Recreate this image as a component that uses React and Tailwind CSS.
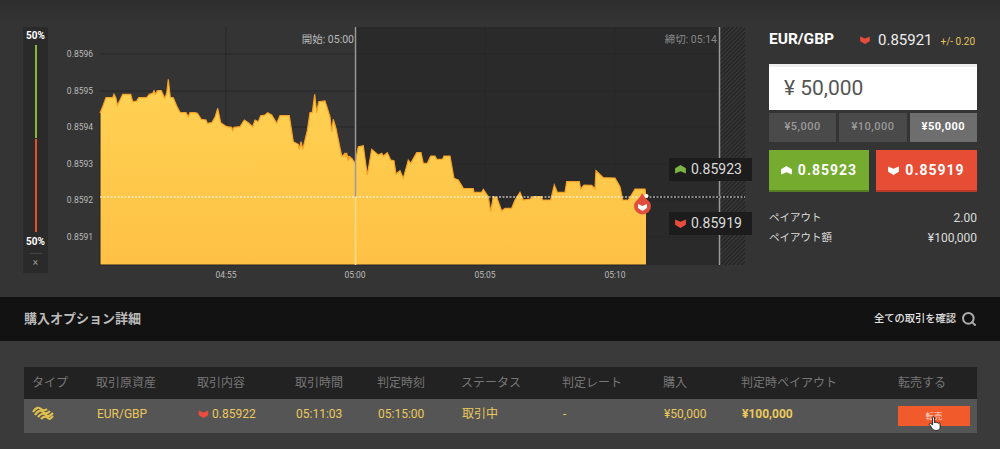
import { Search } from "lucide-react";

const FONT = "font-['Roboto','Noto_Sans_CJK_JP',sans-serif]";

// puntos de la curva, medidos sobre el recorte x3
const LEFT = [[300,340],[310,315],[318,293],[338,293],[342,283],[348,295],[352,316],[360,300],[368,283],[392,283],[398,305],[410,303],[416,293],[440,293],[448,283],[458,280],[462,272],[466,283],[472,272],[484,272],[494,295],[500,280],[505,238],[511,292],[520,293],[530,318],[540,337],[558,338],[565,350],[570,338],[585,338],[592,340],[604,358],[618,360],[622,370],[635,368],[645,352],[653,325],[662,368],[680,380],[695,382],[698,392],[702,382],[720,380],[733,360],[745,368],[758,380],[765,360],[775,365],[782,347],[795,345],[803,338],[815,345],[830,370],[840,347],[868,347],[880,425],[895,433],[898,448],[903,425],[908,448],[922,392],[930,338],[937,338],[944,283],[950,338],[956,305],[975,303],[990,350],[995,395],[1000,358],[1008,385],[1025,468],[1040,460],[1045,480],[1050,470]];
const RIGHT = [[8,468],[15,460],[22,470],[35,475],[45,490],[55,440],[70,437],[82,525],[95,448],[115,465],[125,460],[130,468],[142,458],[152,480],[162,482],[168,522],[180,512],[190,535],[205,480],[212,490],[230,458],[243,458],[250,490],[262,490],[272,468],[285,468],[290,478],[308,477],[312,468],[330,468],[342,535],[355,540],[370,565],[400,566],[402,577],[425,577],[430,568],[445,590],[452,635],[460,590],[470,592],[485,633],[495,625],[515,625],[525,600],[540,577],[550,600],[570,597],[580,590],[605,590],[607,600],[632,600],[643,555],[652,577],[675,577],[680,545],[718,545],[722,567],[732,555],[755,556],[765,567],[768,512],[790,533],[825,534],[840,560],[848,600],[865,600],[885,567],[915,567],[918,590]];

const points = [...LEFT.map(([x, y]) => [x / 3, y / 3]), ...RIGHT.map(([x, y]) => [x / 3 + 340, y / 3])];
const linePath = points.map(([x, y], i) => `${i === 0 ? "M" : "L"}${x.toFixed(1)} ${y.toFixed(1)}`).join(" ");
const areaPath = `${linePath} L646 265 L100 265 Z`;

const PRICE_LABELS = [["0.8596", 54], ["0.8595", 91], ["0.8594", 127], ["0.8593", 164], ["0.8592", 200], ["0.8591", 237]];
const TIME_LABELS = [["04:55", 226], ["05:00", 355], ["05:05", 485], ["05:10", 615]];

const COLS = "grid grid-cols-[64px_101px_98px_82px_84px_101px_101px_78px_157px_1fr] items-center";

function DownIcon({ className = "", fill = "#e74c3c" }) {
  return (
    <svg viewBox="0 0 12 10" className={className}>
      <path d="M0 0.5 L6 3 L12 0.5 V6.5 L6 10 L0 6.5 Z" fill={fill} />
    </svg>
  );
}

function UpIcon({ className = "", fill = "#7cb342" }) {
  return (
    <svg viewBox="0 0 12 10" className={className}>
      <path d="M0 9.5 L6 7 L12 9.5 V3.5 L6 0 L0 3.5 Z" fill={fill} />
    </svg>
  );
}

function Sentiment() {
  return (
    <div className="w-[25px] h-[246px] bg-[#2a2a2a] flex flex-col items-center shrink-0">
      <span className="text-[10px] leading-[18px] font-bold text-white">50%</span>
      <div className="w-[2px] h-[93px] bg-[#8bb53f]" />
      <div className="w-[2px] h-[93px] mt-[1px] bg-[#e4512b]" />
      <span className="text-[10px] leading-[18px] mt-[1px] font-bold text-white">50%</span>
      <div className="w-[12px] h-[1px] mt-[2px] bg-[#444]" />
      <span className="text-[10px] leading-[18px] text-[#999]">×</span>
    </div>
  );
}

function Chart() {
  return (
    <div className="relative w-[705px] h-[270px] -mt-[27px] shrink-0">
      <svg viewBox="48 0 705 290" className="w-[705px] h-[290px] block">
        <defs>
          <linearGradient id="area" x1="0" y1="0" x2="0" y2="1">
            <stop offset="0" stopColor="#ffd253" />
            <stop offset="1" stopColor="#fec145" />
          </linearGradient>
          <pattern id="hatch" width="3" height="3" patternUnits="userSpaceOnUse" patternTransform="rotate(-45)">
            <rect width="3" height="3" fill="#3a3a3a" />
            <rect width="3" height="1.5" fill="#222" />
          </pattern>
        </defs>
        <rect x="100" y="27" width="255" height="238" fill="#343434" />
        <rect x="355" y="27" width="366" height="238" fill="#2a2a2a" />
        <rect x="720" y="27" width="25" height="238" fill="url(#hatch)" />
        {PRICE_LABELS.map(([label, y]) => (
          <g key={label}>
            <line x1="100" x2="720" y1={y} y2={y} stroke="#272727" />
            <text x="93" y={y + 3} textAnchor="end" fontSize="8.5" fill="#bbb" fontFamily="Roboto">{label}</text>
          </g>
        ))}
        {TIME_LABELS.map(([label, x]) => (
          <g key={label}>
            <line x1={x} x2={x} y1="27" y2="265" stroke="#272727" />
            <text x={x} y="278" textAnchor="middle" fontSize="8.5" fill="#bbb" fontFamily="Roboto">{label}</text>
          </g>
        ))}
        <path d={areaPath} fill="url(#area)" />
        <path d={linePath} fill="none" stroke="#f7a325" strokeWidth="1.2" />
        <line x1="100" x2="100" y1="113" y2="265" stroke="#222" />
        <line x1="100" x2="646" y1="265" y2="265" stroke="#222" strokeWidth="1.2" />
        <line x1="355.5" x2="355.5" y1="27" y2="197" stroke="#999" strokeWidth="1.5" />
        <line x1="355.5" x2="355.5" y1="197" y2="265" stroke="#ffe08a" strokeWidth="1.5" />
        <line x1="719.5" x2="719.5" y1="27" y2="265" stroke="#999" strokeWidth="1.5" />
        <line x1="646" x2="745" y1="197" y2="197" stroke="#111" strokeWidth="1.5" />
        <line x1="100" x2="745" y1="197" y2="197" stroke="#fff" strokeDasharray="2 1.5" />
        <path d="M642 193 C645 199 651 201 651 206 A8.5 8.5 0 1 1 634 206 C634 201 640 199 642 193 Z" fill="#e14e3c" />
        <path d="M638 204 L642.5 206 L647 204 V208 L642.5 211 L638 208 Z" fill="#fff" />
        <circle cx="646.5" cy="196" r="2" fill="#fff" />
        <text x="354" y="43" textAnchor="end" fontSize="10.5" fill="#bbb" fontFamily="Roboto, 'Noto Sans CJK JP'">開始: 05:00</text>
        <text x="717" y="43" textAnchor="end" fontSize="10.5" fill="#888" fontFamily="Roboto, 'Noto Sans CJK JP'">締切: 05:14</text>
      </svg>
      <div className="absolute left-[621px] top-[158px] w-[83px] h-[23px] bg-[#1c1c1c] flex items-center pl-[6px] gap-[5px] text-[14px] text-[#ddd]">
        <UpIcon className="w-[11px] h-[9px]" />
        0.85923
      </div>
      <div className="absolute left-[621px] top-[212px] w-[83px] h-[23px] bg-[#1c1c1c] flex items-center pl-[6px] gap-[5px] text-[14px] text-[#ddd]">
        <DownIcon className="w-[11px] h-[9px]" />
        0.85919
      </div>
    </div>
  );
}

function TradePanel() {
  return (
    <div className="w-[208px] ml-[16px] shrink-0">
      <div className="h-[26px] flex items-center text-white">
        <span className="text-[15.5px] font-bold w-[91px]">EUR/GBP</span>
        <DownIcon className="w-[10px] h-[8px] mr-[8px]" />
        <span className="text-[15px] text-[#eee] mr-[8px]">0.85921</span>
        <span className="text-[10px] text-[#e8c55c] mt-[2px]">+/- 0.20</span>
      </div>
      <div className="h-[46px] mt-[11px] bg-white flex items-center pl-[15px] text-[21px] text-[#555] border-t-[3px] border-[#eee]">
        ¥ 50,000
      </div>
      <div className="grid grid-cols-3 gap-[3px] mt-[3px] h-[29px] text-[11px] tracking-[0.5px] font-medium">
        <div className="bg-[#4a4a4a] text-[#999] flex items-center justify-center">¥5,000</div>
        <div className="bg-[#4a4a4a] text-[#999] flex items-center justify-center">¥10,000</div>
        <div className="bg-[#6e6e6e] text-white font-bold flex items-center justify-center">¥50,000</div>
      </div>
      <div className="flex justify-between mt-[8px] text-[14px] font-bold tracking-[1px] text-white">
        <div className="w-[100px] h-[42px] bg-[#75ab2f] border-b-2 border-[#557f22] flex items-center justify-center gap-[6px]">
          <UpIcon fill="#fff" className="w-[11px] h-[9px]" />
          0.85923
        </div>
        <div className="w-[101px] h-[42px] bg-[#e74c35] border-b-2 border-[#b83a28] flex items-center justify-center gap-[6px]">
          <DownIcon fill="#fff" className="w-[11px] h-[9px]" />
          0.85919
        </div>
      </div>
      <div className="flex justify-between mt-[16px] text-[10.5px] leading-[20px] text-[#ddd]">
        <span>ペイアウト</span>
        <span className="text-[12px]">2.00</span>
      </div>
      <div className="flex justify-between text-[10.5px] leading-[20px] text-[#ddd]">
        <span>ペイアウト額</span>
        <span className="text-[12px]">¥100,000</span>
      </div>
    </div>
  );
}

function TypeLogo() {
  return (
    <svg viewBox="0 0 22 14" className="w-[22px] h-[14px] -mt-[3px] -ml-px" fill="none" stroke="#e0c04c" strokeWidth="2.2">
      <path d="M1 6 C4 1 7 1 9 3 S13 5 15 3" />
      <path d="M3 9 C6 4 9 4 11 6 S15 8 18 5" />
      <path d="M6 11 C9 7 12 7 14 9 S18 10 21 7" />
      <path d="M9 13 C12 10 14 10 16 12 S19 12 21 10" />
    </svg>
  );
}

export default function App() {
  return (
    <div className={`${FONT} w-[1000px] h-[449px] overflow-hidden bg-[#333] flex flex-col`}>
      <div className="flex items-start pl-[23px] pt-[27px] h-[297px] shrink-0 bg-gradient-to-b from-[#2e2e2e] to-[#343434] to-[8%]">
        <Sentiment />
        <Chart />
        <TradePanel />
      </div>

      <div className="h-[44px] shrink-0 bg-[#121212] flex items-center justify-between pl-[24px] pr-[23px]">
        <span className="text-[13px] font-bold text-[#bbb]">購入オプション詳細</span>
        <span className="flex items-center gap-[5px] text-[10.25px] font-medium text-[#e5e5e5]">
          全ての取引を確認
          <Search size={16} strokeWidth={3} className="text-[#aaa]" />
        </span>
      </div>

      <div className="flex-1 bg-[#3a3a3a] pr-[23px] pl-[24px] pt-[26px]">
        <div className={`${COLS} pl-2 h-[32px] bg-[#222] text-[12px] text-[#777]`}>
          <span>タイプ</span>
          <span>取引原資産</span>
          <span>取引内容</span>
          <span>取引時間</span>
          <span>判定時刻</span>
          <span>ステータス</span>
          <span>判定レート</span>
          <span>購入</span>
          <span>判定時ペイアウト</span>
          <span>転売する</span>
        </div>
        <div className={`${COLS} pl-[9px] h-[34px] bg-[#555] text-[12px] text-[#ecc95c] pb-[4px]`}>
          <TypeLogo />
          <span>EUR/GBP</span>
          <span className="flex items-center gap-[3px]">
            <DownIcon className="w-[11px] h-[8px]" />
            0.85922
          </span>
          <span>05:11:03</span>
          <span>05:15:00</span>
          <span>取引中</span>
          <span>-</span>
          <span>¥50,000</span>
          <span className="font-bold">¥100,000</span>
          <span className="relative flex h-[20px] w-[72px] mt-[4px] -ml-px items-center justify-center bg-[#f15a2b] text-[8.5px] text-[#f7d9cc]">
            転売
            <svg viewBox="0 0 24 24" className="absolute left-[29px] top-[9px] w-[15px] h-[17px]" fill="#fff" stroke="#222" strokeWidth="1.6" strokeLinejoin="round">
              <path d="M9 3 a1.6 1.6 0 0 1 3.2 0 V11 a1.6 1.6 0 0 1 3 0.3 a1.6 1.6 0 0 1 3 0.5 a1.5 1.5 0 0 1 2.8 1 V18 c0 3 -2 5 -5 5 h-3 c-3 0 -4 -2 -6 -5 l-3 -4 c-1 -1.500 0.800 -3 2 -2 l3 2 Z" />
            </svg>
          </span>
        </div>
      </div>
    </div>
  );
}
